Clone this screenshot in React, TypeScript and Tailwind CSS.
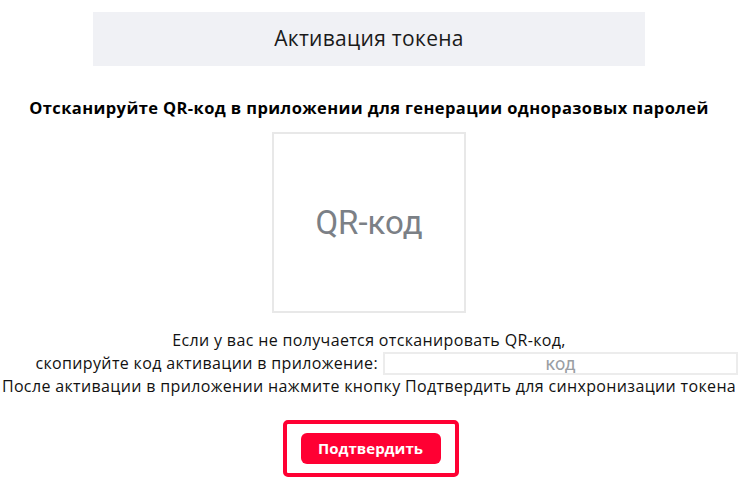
import React from "react";

export default function App() {
  return (
    <div className="w-[752px] h-[483px] bg-white overflow-hidden" style={{ fontFamily: "'Open Sans', sans-serif" }}>
      <div className="w-[738px] flex flex-col items-center">
        <div className="mt-[12px] w-[552px] h-[54px] bg-[#f0f1f5] flex items-center justify-center">
          <span className="text-[21px] text-[#1a1a1a] tracking-[0.3px]">Активация токена</span>
        </div>
        <div className="mt-[31px] text-[16.5px] font-bold text-black leading-[22px] tracking-[0.4px] whitespace-nowrap">
          Отсканируйте QR-код в приложении для генерации одноразовых паролей
        </div>
        <div className="mt-[13px] w-[194px] h-[181px] border-2 border-[#e8e8e8] flex items-center justify-center">
          <span className="text-[33px] text-[#7b8086]" style={{ fontFamily: "Roboto, sans-serif" }}>QR-код</span>
        </div>
        <div className="mt-[16px] text-[16px] text-[#111] leading-[23px] tracking-[0.35px] whitespace-nowrap">
          Если у вас не получается отсканировать QR-код,
        </div>
        <div className="w-full grid grid-cols-[1fr_355px] gap-[5px] items-center">
          <span className="text-right text-[16px] text-[#111] leading-[23px] tracking-[0.35px] whitespace-nowrap">скопируйте код активации в приложение:</span>
          <div className="h-[23px] border-2 border-[#ececec] flex items-center justify-center">
            <span className="text-[18px] leading-[19px] text-[#9a9ea3]" style={{ fontFamily: "Roboto, sans-serif" }}>код</span>
          </div>
        </div>
        <div className="text-[16px] text-[#111] leading-[23px] tracking-[0.35px] whitespace-nowrap">
          После активации в приложении нажмите кнопку Подтвердить для синхронизации токена
        </div>
        <div className="mt-[22px] ml-[3px] w-[176px] h-[57px] border-[4px] border-[#ff0033] rounded-[5px] flex items-center justify-center">
          <button className="w-[140px] h-[31px] bg-[#ff0033] rounded-[6px] text-white text-[15px] font-bold">
            Подтвердить
          </button>
        </div>
      </div>
    </div>
  );
}
